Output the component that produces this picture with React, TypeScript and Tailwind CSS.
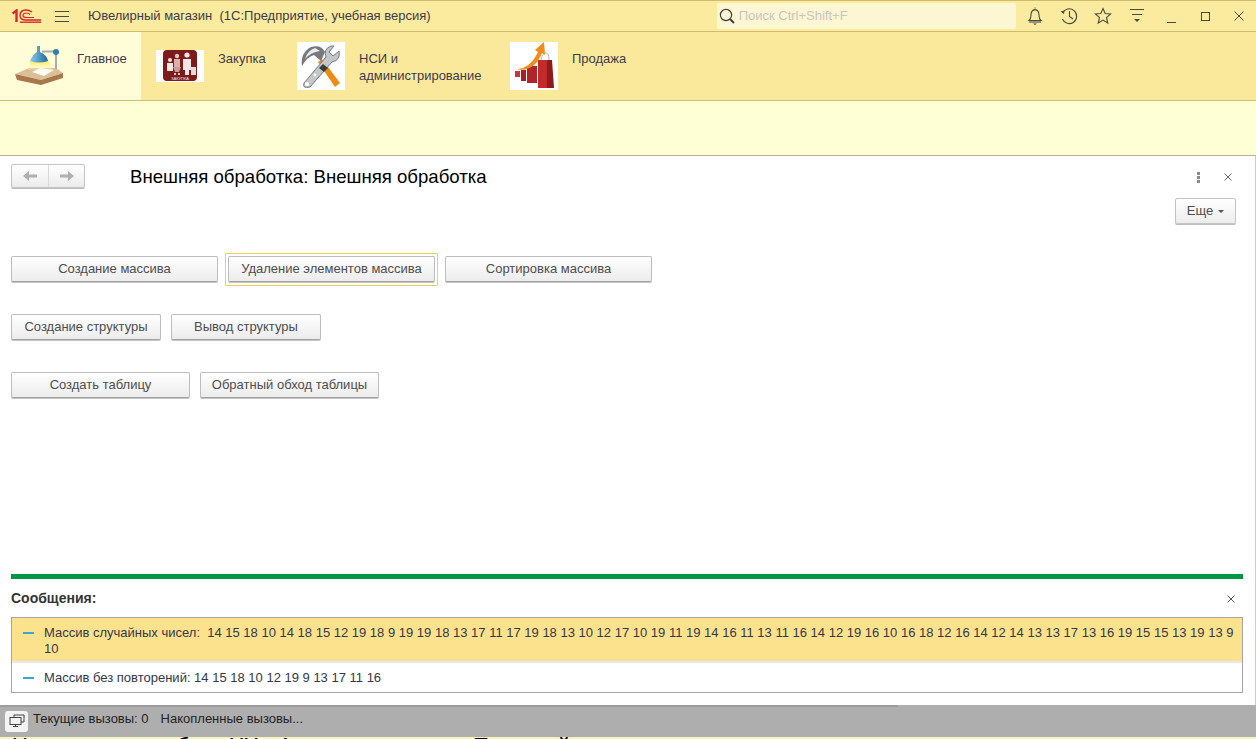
import React from "react";

const font = "font-['Liberation_Sans',Arial,sans-serif]";

function LampIcon() {
  return (
    <svg width="48" height="41" viewBox="0 0 48 41" className="shrink-0">
      <defs>
        <linearGradient id="beam" x1="0" y1="0" x2="0" y2="1">
          <stop offset="0" stopColor="#ffe63c" />
          <stop offset="1" stopColor="#fffbd0" stopOpacity="0.2" />
        </linearGradient>
        <linearGradient id="shade" x1="0" y1="0" x2="1" y2="0">
          <stop offset="0" stopColor="#8ccbe6" />
          <stop offset="1" stopColor="#1c6a9e" />
        </linearGradient>
      </defs>
      <path d="M0 29 L14 23 H41 L48 28 L26 35 Z" fill="#dcbf97" />
      <path d="M0 29 L26 35 L48 28 V33 L26 40 L2 35 Z" fill="#a8774a" />
      <path d="M17 27 L25 23 L39 25 L29 31 Z" fill="#fdfbf2" />
      <path d="M16 15 H33 L38 25 H13 Z" fill="url(#beam)" />
      <path d="M15 16 Q18 9 22 7 L22 1 H25 V7 Q32 10 33 16 Q24 19 15 16 Z" fill="url(#shade)" />
      <path d="M27 6.5 H41 V24" fill="none" stroke="#a7adb0" strokeWidth="2" />
      <circle cx="41" cy="7" r="3" fill="#2e7fb0" />
    </svg>
  );
}

function PurchaseIcon() {
  return (
    <div className="mt-[8px] flex h-[32px] w-[48px] shrink-0 justify-center bg-white">
      <svg width="34" height="31" viewBox="0 0 34 31">
        <rect width="34" height="31" rx="4" fill="#7c1a1c" />
        <circle cx="24" cy="5" r="2.6" fill="#f3e6e4" />
        <path d="M20 9 H28 V20 H26 V25 H22 V20 H20 Z" fill="#f3e6e4" />
        <rect x="28" y="17" width="5" height="8" fill="#e9d7d5" />
        <circle cx="14" cy="6" r="2.2" fill="#e9c8c0" />
        <path d="M11 9 H17 V17 H11 Z" fill="#d9b3ab" />
        <circle cx="7" cy="10" r="2" fill="#f3e6e4" />
        <path d="M4 13 H10 V21 H4 Z" fill="#f3e6e4" />
        <path d="M10 17 H18 L16 22 H12 Z" fill="#cc9999" />
        <circle cx="12" cy="24" r="1" fill="#fff" />
        <circle cx="16" cy="24" r="1" fill="#fff" />
        <text x="17" y="30" textAnchor="middle" fontSize="4" fill="#f3e6e4" fontFamily="Liberation Sans">ЗАКУПКА</text>
      </svg>
    </div>
  );
}

function ToolsIcon() {
  return (
    <div className="h-[48px] w-[48px] shrink-0 bg-white">
      <svg width="48" height="48" viewBox="0 0 48 48">
        <path d="M21 20 L38 45 L43 41 L25 17 Z" fill="#ee8c12" />
        <path d="M5 24 Q3 11 14 5 Q24 2 28 10 L24 19 L17 13 Q10 15 5 24 Z" fill="#77797c" />
        <path d="M8 17 Q10 9 18 6 L23 9 Q14 10 8 17 Z" fill="#e8eaec" />
        <path d="M7 41 L29 15 Q26 7 34 4 L37 4 L32 10 L36 14 L42 9 Q44 18 35 20 L13 45 Q5 47 7 41 Z" fill="#c4c7ca" stroke="#77797c" strokeWidth="1" />
        <path d="M22 26 L27 30 L31 26 L26 22 Z" fill="#3c3c3c" />
        <circle cx="10" cy="42" r="2" fill="#fff" />
        <circle cx="18" cy="33" r="1.4" fill="#fff" />
      </svg>
    </div>
  );
}

function SalesIcon() {
  return (
    <div className="h-[48px] w-[48px] shrink-0 bg-white">
      <svg width="48" height="48" viewBox="0 0 48 48">
        <rect x="5" y="29" width="5" height="6" fill="#c8383a" />
        <rect x="11" y="28" width="5" height="11" fill="#a81f24" />
        <rect x="17" y="24" width="10" height="17" fill="#b3242a" />
        <rect x="28" y="18" width="9" height="28" fill="#c22a2c" />
        <path d="M37 18 H42 L44 46 H37 Z" fill="#8f1a1c" />
        <path d="M31 18 Q32 11 36 11 Q39 11 39 18" fill="none" stroke="#bbb" strokeWidth="1" />
        <path d="M6 27 Q20 27 28 10 L25 8 L34 0 L35 13 L32 11 Q24 31 6 27 Z" fill="#f08c1c" />
      </svg>
    </div>
  );
}

function SectionItem({ icon, label, active, wClass }: { icon: React.ReactNode; label: React.ReactNode; active?: boolean; wClass: string }) {
  return (
    <div className={`flex h-[68px] items-start pt-[10px] ${wClass} ${active ? "bg-[#fffdd8]" : ""}`}>
      {icon}
      <div className="pt-[8px] pl-[14px] text-[13px] leading-[17px] text-[#3f3a4c]">{label}</div>
    </div>
  );
}

function Btn({ label, wClass }: { label: string; wClass: string }) {
  return (
    <button className={`flex h-[26px] items-center justify-center rounded-[2px] border border-[#bdbdbd] border-b-[#a3a3a3] bg-gradient-to-b from-white to-[#ececec] text-[13px] text-[#4d4d4d] shadow-[0_1px_0_#c4c4c4] ${wClass}`}>
      {label}
    </button>
  );
}

function CloseX({ color }: { color: string }) {
  return (
    <svg width="8" height="8" viewBox="0 0 8 8">
      <path d="M0.5 0.5 L7.5 7.5 M7.5 0.5 L0.5 7.5" stroke={color} strokeWidth="1" />
    </svg>
  );
}

function Slot({ children }: { children: React.ReactNode }) {
  return <div className="flex w-[34px] shrink-0 items-center justify-center">{children}</div>;
}

function TopIcons() {
  const c = "#4a4a45";
  return (
    <div className="ml-[2px] flex items-center">
      <Slot>
        <svg width="20" height="20" viewBox="0 0 20 20" fill="none" stroke={c} strokeWidth="1.1">
          <path d="M4 14.5 Q6 13 6 9 Q6 4 10 3.6 Q14 4 14 9 Q14 13 16 14.5 Z" />
          <path d="M9.5 2 h1" />
          <path d="M4 16 H16" />
          <path d="M8 17.5 H12 L10 19 Z" fill={c} stroke="none" />
        </svg>
      </Slot>
      <Slot>
        <svg width="20" height="20" viewBox="0 0 20 20" fill="none" stroke={c} strokeWidth="1.1">
          <path d="M3.6 7 A7.4 7.4 0 1 1 3.4 13" />
          <path d="M1.5 5.5 L5 8 L5.5 4.5 Z" fill={c} stroke="none" />
          <path d="M10.5 5 V10.5 L14 13" />
        </svg>
      </Slot>
      <Slot>
        <svg width="20" height="20" viewBox="0 0 20 20" fill="none" stroke={c} strokeWidth="1.1">
          <path d="M10 2.5 L12.2 7.5 L17.6 8 L13.5 11.6 L14.8 17 L10 14.1 L5.2 17 L6.5 11.6 L2.4 8 L7.8 7.5 Z" />
        </svg>
      </Slot>
      <Slot>
        <svg width="16" height="20" viewBox="0 0 16 20" fill="none" stroke={c} strokeWidth="1">
          <path d="M1 3.5 H15 M3 8.5 H13" />
          <path d="M5 13 H11 L8 16 Z" fill={c} stroke="none" />
        </svg>
      </Slot>
      <Slot><div className="mt-[13px] h-px w-[9px] bg-[#4a4a45]" /></Slot>
      <Slot><div className="h-[9px] w-[9px] border border-[#4a4a45]" /></Slot>
      <Slot>
        <svg width="10" height="10" viewBox="0 0 10 10">
          <path d="M0.5 0.5 L9.5 9.5 M9.5 0.5 L0.5 9.5" stroke={c} strokeWidth="1" />
        </svg>
      </Slot>
    </div>
  );
}

export default function App() {
  return (
    <div className={`relative flex h-[739px] w-[1256px] flex-col overflow-hidden bg-white ${font}`}>
      {/* Title bar */}
      <header className="flex h-[32px] shrink-0 items-center border-y border-[#cdbd6c] bg-[#fbeb9e]">
        <svg width="30" height="14" viewBox="0 0 30 14" className="ml-[12px] shrink-0" fill="none" stroke="#d7252b">
          <path d="M0.5 4.5 L4.5 1.5 V13" strokeWidth="2.4" />
          <path d="M20 3 Q17 1 14 1 Q8 1 8 6.5 Q8 11 14 11 H29" strokeWidth="1.4" />
          <path d="M18 5.5 Q16.5 4 14.5 4 Q11 4 11 6.5 Q11 8.5 14.5 8.5 H22" strokeWidth="1.2" />
          <path d="M8 13.2 H29" strokeWidth="1.4" />
        </svg>
        <div className="ml-[13px] flex w-[14px] shrink-0 flex-col gap-[4px]">
          <div className="h-px bg-[#4a4a45]" />
          <div className="h-px bg-[#4a4a45]" />
          <div className="h-px bg-[#4a4a45]" />
        </div>
        <div className="ml-[19px] w-[630px] text-[13px] text-[#3f3a4c]">Ювелирный магазин&nbsp; (1С:Предприятие, учебная версия)</div>
        <div className="flex h-[26px] w-[300px] items-center rounded-[2px] bg-[#fdf6d2] pl-[2px] text-[13px] text-[#c9c6c0]">
          <svg width="16" height="16" viewBox="0 0 16 16" fill="none" stroke="#3f3f3f" className="shrink-0">
            <circle cx="7" cy="7" r="5.6" strokeWidth="1.2" />
            <path d="M11 11 L15 15" strokeWidth="2" />
          </svg>
          <span className="ml-[4px]">Поиск Ctrl+Shift+F</span>
        </div>
        <TopIcons />
      </header>

      {/* Sections panel */}
      <nav className="flex h-[69px] shrink-0 border-b border-[#cdbd6c] bg-[#fbe99b]">
        <SectionItem active wClass="w-[141px] pl-[15px] pt-[13px]" icon={<LampIcon />} label={<span className="-mt-[3px] block">Главное</span>} />
        <SectionItem wClass="w-[141px] pl-[15px]" icon={<PurchaseIcon />} label="Закупка" />
        <SectionItem wClass="w-[213px] pl-[15px]" icon={<ToolsIcon />} label={<>НСИ и<br />администрирование</>} />
        <SectionItem wClass="w-[200px] pl-[15px]" icon={<SalesIcon />} label="Продажа" />
      </nav>

      {/* Function panel */}
      <div className="h-[55px] shrink-0 border-b border-[#b5b29a] bg-[#ffffd5]" />

      {/* Form */}
      <main className="flex min-h-0 flex-1 flex-col border-r border-[#d8cf9a] pr-[12px] pl-[11px]">
        <div className="flex h-[42px] shrink-0 items-center">
          <div className="mb-[3px] flex h-[24px] w-[74px] shrink-0 rounded-[2px] border border-[#c4c4c4] bg-gradient-to-b from-white to-[#ececec] shadow-[0_1px_0_#bdbdbd]">
            <div className="flex w-[37px] items-center justify-center border-r border-[#d8d8d8]">
              <svg width="14" height="10" viewBox="0 0 14 10" fill="#b0b0b0"><path d="M0 5 L6 0 V3.5 H14 V6.5 H6 V10 Z" /></svg>
            </div>
            <div className="flex flex-1 items-center justify-center">
              <svg width="14" height="10" viewBox="0 0 14 10" fill="#b0b0b0"><path d="M14 5 L8 0 V3.5 H0 V6.5 H8 V10 Z" /></svg>
            </div>
          </div>
          <h1 className="ml-[45px] flex-1 text-[18.6px] font-normal text-black">Внешняя обработка: Внешняя обработка</h1>
          <div className="flex flex-col gap-[1px]">
            <div className="h-[3px] w-[3px] bg-[#8a8a8a]" />
            <div className="h-[3px] w-[3px] bg-[#8a8a8a]" />
            <div className="h-[3px] w-[3px] bg-[#8a8a8a]" />
          </div>
          <div className="mr-[11px] ml-[24px] flex"><CloseX color="#666" /></div>
        </div>

        <div className="flex justify-end pr-[7px]">
          <button className="flex h-[26px] w-[61px] items-center justify-center gap-[5px] rounded-[2px] border border-[#c4c4c4] bg-gradient-to-b from-white to-[#ececec] text-[13px] text-[#4d4d4d] shadow-[0_1px_0_#bdbdbd]">
            Еще
            <svg width="6" height="3" viewBox="0 0 6 3" fill="#555"><path d="M0 0 H6 L3 3 Z" /></svg>
          </button>
        </div>

        <div className="mt-[29px] flex h-[32px] items-start">
          <Btn label="Создание массива" wClass="mt-[3px] w-[207px]" />
          <div className="ml-[7px] rounded-[1px] border border-[#f2cd58] px-[2px] pt-[2px] pb-[3px]">
            <Btn label="Удаление элементов массива" wClass="w-[207px]" />
          </div>
          <Btn label="Сортировка массива" wClass="mt-[3px] ml-[7px] w-[207px]" />
        </div>

        <div className="mt-[29px] flex gap-[10px]">
          <Btn label="Создание структуры" wClass="w-[150px]" />
          <Btn label="Вывод структуры" wClass="w-[150px]" />
        </div>

        <div className="mt-[32px] flex gap-[10px]">
          <Btn label="Создать таблицу" wClass="w-[179px]" />
          <Btn label="Обратный обход таблицы" wClass="w-[179px]" />
        </div>

        {/* Messages */}
        <div className="mt-[176px] h-[5px] shrink-0 bg-[#009646]" />
        <div className="flex h-[38px] shrink-0 items-center justify-between pr-[8px]">
          <span className="text-[14px] font-bold text-[#333]">Сообщения:</span>
          <div className="mt-[2px] flex"><CloseX color="#555" /></div>
        </div>
        <div className="shrink-0 border border-[#a5a5a5] text-[13px] leading-[16px] text-[#333848]">
          <div className="flex h-[43px] bg-[#fde28e] pt-[7px] pl-[11px]">
            <div className="mt-[7px] h-[2px] w-[11px] shrink-0 bg-[#2fa9e6]" />
            <div className="ml-[10px] flex-1">Массив случайных чисел:&nbsp; 14 15 18 10 14 18 15 12 19 18 9 19 19 18 13 17 11 17 19 18 13 10 12 17 10 19 11 19 14 16 11 13 11 16 14 12 19 16 10 16 18 12 16 14 12 14 13 13 17 13 16 19 15 15 13 19 13 9 10</div>
          </div>
          <div className="flex h-[31px] items-center border-t-2 border-[#e8e8e8] pl-[11px]">
            <div className="h-[2px] w-[11px] shrink-0 bg-[#2fa9e6]" />
            <div className="ml-[10px]">Массив без повторений: 14 15 18 10 12 19 9 13 17 11 16</div>
          </div>
        </div>
      </main>

      {/* Performance bar over the page */}
      <div className="relative flex h-[32px] shrink-0 items-center bg-[#aeaeae] pl-[5px] text-[13px] text-[#222]">
        <div className="absolute top-0 left-0 h-[2px] w-[898px] bg-[#9c9c9c]" />
        <div className="flex h-[21px] w-[23px] items-center justify-center rounded-[3px] bg-[#f4f4f4]">
          <svg width="16" height="14" viewBox="0 0 16 14" fill="none" stroke="#444">
            <path d="M5 3 V1 H15 V8 H12" />
            <rect x="1" y="3.5" width="11" height="7" />
            <path d="M4 12.5 H9 M6.5 11 V12.5" />
          </svg>
        </div>
        <span className="ml-[5px] pb-[4px]">Текущие вызовы: 0</span>
        <span className="ml-[12px] pb-[4px]">Накопленные вызовы...</span>
      </div>

      {/* Page beneath, only the tops of its letters show */}
      <div className="h-[2px] shrink-0 overflow-hidden bg-[#fbf3bd] pl-[12px]">
        <div className="-mt-[2px] text-[22px] leading-[22px] whitespace-nowrap text-black">Неповторная работа ХХ - Активная модель - Торговый вкомицент</div>
      </div>
    </div>
  );
}
